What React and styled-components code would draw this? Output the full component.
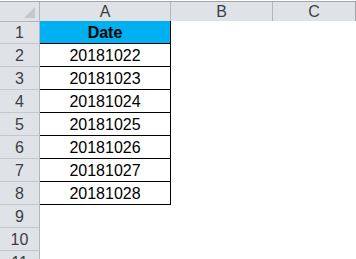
import styled, { createGlobalStyle } from "styled-components";

const GlobalStyle = createGlobalStyle`
  html, body {
    margin: 0;
    padding: 0;
    background: #fff;
    overflow: hidden;
  }
  body {
    font-family: "Liberation Sans", Arial, sans-serif;
  }
`;

const dates = [
  "20181022",
  "20181023",
  "20181024",
  "20181025",
  "20181026",
  "20181027",
  "20181028",
];

export default function App() {
  const rows = [];
  for (let i = 1; i <= 11; i++) {
    let value = "";
    if (i === 1) value = "Date";
    else if (i <= 8) value = dates[i - 2];
    rows.push(
      <Row key={i}>
        <RowHead>{i}</RowHead>
        <Cell $fill={i === 1} $bold={i === 1} $boxed={i <= 8}>
          {value}
        </Cell>
        <Cell />
        <Cell />
      </Row>
    );
  }

  return (
    <>
      <GlobalStyle />
      <Sheet>
        <HeadRow>
          <Corner>
            <Triangle />
          </Corner>
          <ColHead>A</ColHead>
          <ColHead>B</ColHead>
          <ColHead $last>C</ColHead>
        </HeadRow>
        {rows}
      </Sheet>
    </>
  );
}

const Sheet = styled.div`
  width: 356px;
  height: 259px;
  overflow: hidden;
  padding-top: 1px;
  box-sizing: border-box;
  background: #fff;
`;

const Row = styled.div`
  display: grid;
  grid-template-columns: 40px 131px 102px 83px;
  height: 23px;
`;

const HeadRow = styled(Row)`
  border-top: 1px solid #a3a6aa;
  box-sizing: border-box;
  height: 20px;
`;

const Corner = styled.div`
  position: relative;
  background: #dfe2e6;
  border-right: 1px solid #b3b7bc;
  border-bottom: 1px solid #b3b7bc;
`;

const Triangle = styled.div`
  position: absolute;
  right: 4px;
  bottom: 3px;
  width: 0;
  height: 0;
  border-left: 11px solid transparent;
  border-bottom: 11px solid #c4c7cc;
`;

const ColHead = styled.div`
  display: flex;
  align-items: center;
  justify-content: center;
  background: #dfe2e6;
  border-right: 1px solid ${(p) => (p.$last ? "#a3a6aa" : "#b3b7bc")};
  border-bottom: 1px solid #b3b7bc;
  color: #3b3f45;
  font-size: 16px;
  padding-top: 1px;
`;

const RowHead = styled.div`
  display: flex;
  align-items: center;
  justify-content: center;
  background: #dfe2e6;
  border-right: 1px solid #b3b7bc;
  border-bottom: 1px solid #c4c8cd;
  color: #3b3f45;
  font-size: 16px;
  padding-top: 1px;
`;

const Cell = styled.div`
  display: flex;
  align-items: center;
  justify-content: center;
  background: ${(p) => (p.$fill ? "#00b0f0" : "#fff")};
  border-right: 1px solid ${(p) => (p.$boxed ? "#000" : "transparent")};
  border-bottom: 1px solid ${(p) => (p.$boxed ? "#000" : "transparent")};
  color: #000;
  font-size: 16px;
  font-weight: ${(p) => (p.$bold ? 700 : 400)};
  padding-top: 1px;
`;
